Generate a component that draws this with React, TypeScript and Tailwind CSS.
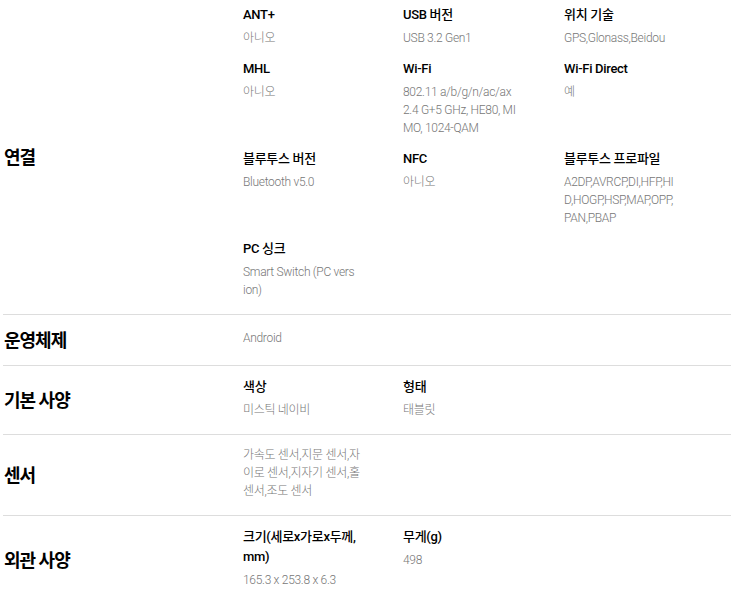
import React from "react";

type Spec = { title?: string[]; value: string[] };

type Section = { label: string; first?: boolean; specs: Spec[] };

const SECTIONS: Section[] = [
  {
    label: "연결",
    first: true,
    specs: [
      { title: ["ANT+"], value: ["아니오"] },
      { title: ["USB 버전"], value: ["USB 3.2 Gen1"] },
      { title: ["위치 기술"], value: ["GPS,Glonass,Beidou"] },
      { title: ["MHL"], value: ["아니오"] },
      { title: ["Wi-Fi"], value: ["802.11 a/b/g/n/ac/ax", "2.4 G+5 GHz, HE80, MI", "MO, 1024-QAM"] },
      { title: ["Wi-Fi Direct"], value: ["예"] },
      { title: ["블루투스 버전"], value: ["Bluetooth v5.0"] },
      { title: ["NFC"], value: ["아니오"] },
      { title: ["블루투스 프로파일"], value: ["A2DP,AVRCP,DI,HFP,HI", "D,HOGP,HSP,MAP,OPP,", "PAN,PBAP"] },
      { title: ["PC 싱크"], value: ["Smart Switch (PC vers", "ion)"] },
    ],
  },
  { label: "운영체제", specs: [{ value: ["Android"] }] },
  {
    label: "기본 사양",
    specs: [
      { title: ["색상"], value: ["미스틱 네이비"] },
      { title: ["형태"], value: ["태블릿"] },
    ],
  },
  { label: "센서", specs: [{ value: ["가속도 센서,지문 센서,자", "이로 센서,지자기 센서,홀", "센서,조도 센서"] }] },
  {
    label: "외관 사양",
    specs: [
      { title: ["크기(세로x가로x두께,", "mm)"], value: ["165.3 x 253.8 x 6.3"] },
      { title: ["무게(g)"], value: ["498"] },
    ],
  },
];

function SpecItem({ spec }: { spec: Spec }) {
  return (
    <div className="w-[120px]">
      {spec.title && (
        <div className="mb-1 text-[13px] leading-[20px] font-medium tracking-[-0.3px] text-black">
          {spec.title.map((t) => (
            <div key={t}>{t}</div>
          ))}
        </div>
      )}
      <div className="text-[12px] leading-[18px] font-light tracking-[-0.3px] text-[#777777]">
        {spec.value.map((v) => (
          <div key={v}>{v}</div>
        ))}
      </div>
    </div>
  );
}

export default function App() {
  return (
    <div
      className="ml-[3px] w-[728px] bg-white"
      style={{ fontFamily: 'Roboto, "Noto Sans CJK KR", sans-serif' }}
    >
      {SECTIONS.map((s) => (
        <div key={s.label} className="flex min-h-[51px] items-center border-b border-[#dddddd]">
          <div className="w-[240px] shrink-0 pl-px text-[18px] font-bold tracking-[-1px] text-black">
            {s.label}
          </div>
          <div
            className={`grid grid-cols-[160px_161px_160px] gap-y-3 pb-[15px] ${s.first ? "pt-[5px]" : "pt-[11px]"}`}
          >
            {s.specs.map((spec, i) => (
              <SpecItem key={i} spec={spec} />
            ))}
          </div>
        </div>
      ))}
    </div>
  );
}
